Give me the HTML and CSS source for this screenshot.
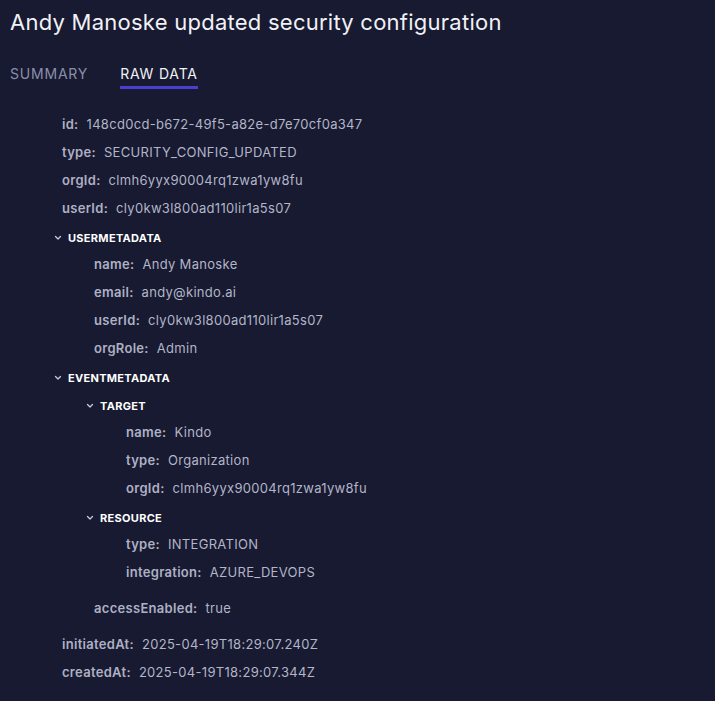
FILE: index.html
```html
<!DOCTYPE html>
<html>
<head>
<meta charset="utf-8">
<link rel="stylesheet" href="styles.css">
</head>
<body>
<h1 class="title">Andy Manoske updated security configuration</h1>
<div class="tabs">
  <span class="tab">SUMMARY</span>
  <span class="tab active">RAW DATA</span>
</div>
<div class="tree">
  <div class="row"><span class="k">id:</span><span class="v">148cd0cd-b672-49f5-a82e-d7e70cf0a347</span></div>
  <div class="row"><span class="k">type:</span><span class="v">SECURITY_CONFIG_UPDATED</span></div>
  <div class="row"><span class="k">orgId:</span><span class="v">clmh6yyx90004rq1zwa1yw8fu</span></div>
  <div class="row"><span class="k">userId:</span><span class="v">cly0kw3l800ad110lir1a5s07</span></div>

  <div class="head"><svg class="chev" viewBox="0 0 8 6" width="8" height="6"><polyline points="1.5,1.5 4,4 6.5,1.5"/></svg><span>USERMETADATA</span></div>
  <div class="group">
    <div class="row"><span class="k">name:</span><span class="v">Andy Manoske</span></div>
    <div class="row"><span class="k">email:</span><span class="v">andy@kindo.ai</span></div>
    <div class="row"><span class="k">userId:</span><span class="v">cly0kw3l800ad110lir1a5s07</span></div>
    <div class="row"><span class="k">orgRole:</span><span class="v">Admin</span></div>
  </div>

  <div class="head"><svg class="chev" viewBox="0 0 8 6" width="8" height="6"><polyline points="1.5,1.5 4,4 6.5,1.5"/></svg><span>EVENTMETADATA</span></div>
  <div class="group">
    <div class="head"><svg class="chev" viewBox="0 0 8 6" width="8" height="6"><polyline points="1.5,1.5 4,4 6.5,1.5"/></svg><span>TARGET</span></div>
    <div class="group">
      <div class="row"><span class="k">name:</span><span class="v">Kindo</span></div>
      <div class="row"><span class="k">type:</span><span class="v">Organization</span></div>
      <div class="row"><span class="k">orgId:</span><span class="v">clmh6yyx90004rq1zwa1yw8fu</span></div>
    </div>
    <div class="head"><svg class="chev" viewBox="0 0 8 6" width="8" height="6"><polyline points="1.5,1.5 4,4 6.5,1.5"/></svg><span>RESOURCE</span></div>
    <div class="group">
      <div class="row"><span class="k">type:</span><span class="v">INTEGRATION</span></div>
      <div class="row"><span class="k">integration:</span><span class="v">AZURE_DEVOPS</span></div>
    </div>
    <div class="row after"><span class="k">accessEnabled:</span><span class="v">true</span></div>
  </div>

  <div class="row after"><span class="k">initiatedAt:</span><span class="v">2025-04-19T18:29:07.240Z</span></div>
  <div class="row"><span class="k">createdAt:</span><span class="v">2025-04-19T18:29:07.344Z</span></div>
</div>
</body>
</html>
```

FILE: styles.css
```css
html, body {
  margin: 0;
  padding: 0;
  background: #171a30;
  height: 100%;
}
body {
  font-family: "Inter", "Noto Sans", sans-serif;
  color: #b3b5c8;
  padding: 8px 10px 0 10px;
}
.title {
  margin: 0;
  font-size: 22px;
  line-height: 28px;
  font-weight: 400;
  letter-spacing: 0.25px;
  color: #f1f1f6;
}
.tabs {
  display: flex;
  gap: 32px;
  margin-top: 28px;
}
.tab {
  font-size: 14px;
  line-height: 20px;
  letter-spacing: 0.8px;
  color: #8c8fa9;
  padding-bottom: 2px;
  border-bottom: 3px solid transparent;
}
.tab.active {
  color: #f1f1f6;
  border-bottom-color: #4a3fd1;
}
.tree {
  margin-top: 21px;
  padding-left: 52px;
  font-size: 13px;
  letter-spacing: 0.3px;
}
.row {
  display: flex;
  align-items: center;
  height: 28px;
}
.row.after {
  margin-top: 8px;
}
.k {
  font-weight: 600;
  color: #aeb0c4;
}
.v {
  margin-left: 8px;
  color: #b3b5c8;
}
.head {
  display: flex;
  align-items: center;
  height: 24px;
  margin-top: 4px;
  margin-left: -8px;
  font-size: 11px;
  font-weight: 700;
  color: #ffffff;
  letter-spacing: 0.3px;
}
.chev {
  width: 8px;
  height: 6px;
  margin-right: 6px;
  fill: none;
  stroke: #c8cad8;
  stroke-width: 1.3;
  stroke-linecap: round;
  stroke-linejoin: round;
}
.group {
  padding-left: 32px;
}
```
